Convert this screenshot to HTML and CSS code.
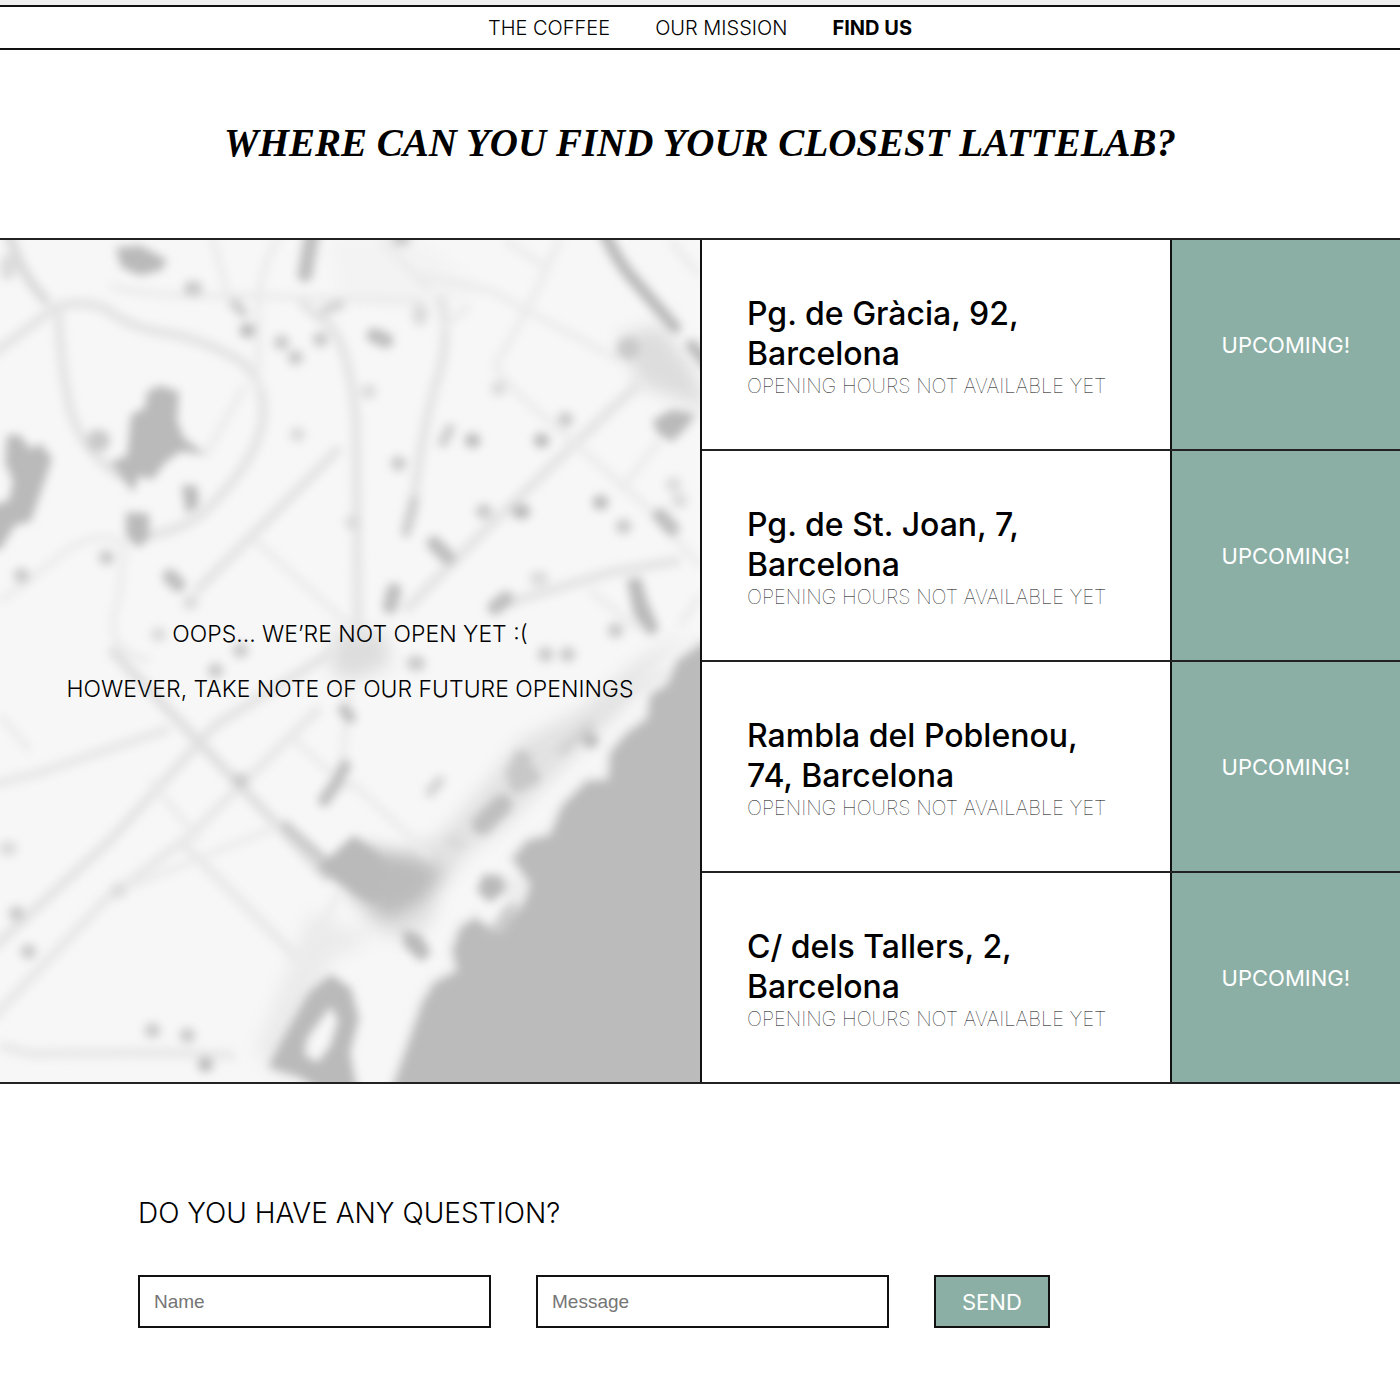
FILE: index.html
```html
<!DOCTYPE html>
<html lang="en">
<head>
  <meta charset="utf-8">
  <meta name="viewport" content="width=device-width, initial-scale=1">
  <title>LatteLab – Find us</title>
  <link rel="stylesheet" href="styles.css">
</head>
<body>
  <header class="top">
    <nav class="nav">
      <a href="#coffee">THE COFFEE</a>
      <a href="#mission">OUR MISSION</a>
      <a href="#find" class="active" aria-current="page">FIND US</a>
    </nav>
  </header>
  <main>
    <h1 class="title">WHERE CAN YOU FIND YOUR CLOSEST LATTELAB?</h1>
    <section class="finder" id="find">
      <div class="map">
        <svg class="map-art" viewBox="0 238 700 845" preserveAspectRatio="xMidYMid slice" aria-hidden="true">
          <defs>
            <filter id="soft" x="-5%" y="-5%" width="110%" height="110%"><feGaussianBlur stdDeviation="5"/></filter>
            <filter id="wide" x="-5%" y="-5%" width="110%" height="110%"><feGaussianBlur stdDeviation="9"/></filter>
          </defs>
          <rect x="0" y="238" width="700" height="845" fill="#f7f7f7"/>
          <!-- pale built-up zones -->
          <g filter="url(#wide)">
            <path fill="#ddd" d="M618 335L660 325L690 365L710 410L670 395L640 385Z"/>
            <path fill="#ddd" d="M335 630L385 632L390 665L350 680L330 670Z"/>
            <path fill="#e2e2e2" d="M690 630L650 670L620 710L580 750L550 780L500 830L470 850L440 890L430 925L400 940L360 920L400 850L440 835L480 790L520 740L580 710L640 660Z"/>
            <path fill="#ebebeb" d="M310 912L375 938L330 960L285 1083L255 1050Z"/>
            <path fill="#f3f3f3" d="M330 238L420 238L480 290L440 310L340 300Z"/>
            <path fill="#bbb" d="M360 845L410 855L445 870L425 900L390 920L350 895Z"/>
          </g>
          <g filter="url(#soft)">
            <!-- streets -->
            <g fill="none" stroke="#e4e4e4" stroke-width="10">
              <path d="M-10 355Q40 320 52 308Q80 298 105 308Q130 328 170 333Q205 340 240 360Q265 380 263 415Q260 460 200 515Q170 535 140 535"/>
              <path d="M58 310Q62 380 72 415Q88 460 130 480"/>
              <path d="M8 230Q20 275 48 302" stroke="#d9d9d9"/>
              <path d="M340 447L195 592"/>
              <path d="M640 382L575 443L490 525L405 610"/>
              <path d="M440 295Q450 330 440 370Q420 430 412 520"/>
              <path d="M358 640L356 420Q350 350 330 325Q315 315 300 300"/>
              <path d="M690 655Q650 680 620 700L560 750" stroke-width="5"/>
              <path d="M335 650L215 725L110 840L-10 950"/>
              <path d="M320 707L190 835L105 900L-10 1020" stroke="#e8e8e8"/>
              <path d="M500 605L610 572L680 560"/>
              <path d="M-10 785L40 772L170 728" stroke="#e8e8e8"/>
              <path d="M110 648L240 785L330 880" stroke="#dfdfdf"/>
              <path d="M180 840L300 960" stroke="#e9e9e9"/>
              <path d="M0 1045L30 1053L165 1052L235 1055" stroke="#e8e8e8"/>
            </g>
            <g fill="none" stroke="#ebebeb" stroke-width="7">
              <path d="M110 285Q150 298 240 295L420 300"/>
              <path d="M212 235L232 310M280 235Q258 270 258 310L258 390"/>
              <path d="M0 600Q30 580 60 555Q100 525 125 545L118 600Q100 650 150 660"/>
              <path d="M245 385L205 455M255 540L350 625"/>
              <path d="M560 238Q535 300 495 365Q500 380 560 430L640 500L700 565"/>
              <path d="M420 275L490 290L620 360M505 240L548 268M470 305L440 330"/>
              <path d="M660 440L620 490M670 240L700 275"/>
              <path d="M700 595L680 625M590 590L640 630"/>
              <path d="M0 715L30 750M150 780L200 840M120 890L280 825"/>
              <path d="M350 680L340 790M350 780L430 855"/>
              <path d="M290 735L350 790M380 238L430 290"/>
              <path d="M310 950L360 850"/>
            </g>
            <!-- darker avenues -->
            <g fill="none" stroke="#b9b9b9" stroke-linecap="round">
              <path stroke-width="12" d="M602 225Q615 260 638 284L675 327M692 345L708 364"/>
              <path stroke-width="15" d="M313 228L305 274" stroke="#bfbfbf"/>
              <path stroke-width="10" d="M285 825L330 865" stroke="#c8c8c8"/>
            </g>
            <!-- sea -->
            <path fill="#bbb" stroke="#f1f1f1" stroke-width="9" d="M720 630L695 643L675 658L665 682L648 692L645 716L625 730L608 750L606 777L585 778L560 803L548 832L525 838L510 858L526 882L522 900L500 930L485 922L475 915L458 925L450 950L455 968L432 980L420 1000L388 1100L720 1100Z"/>
            <path fill="#bbb" d="M720 632L697 646L677 660L667 684L650 694L647 718L627 732L610 752L608 779L587 780L562 805L550 834L527 840L512 858L530 884L524 902L500 932L485 924L475 917L460 927L452 950L457 970L434 982L422 1002L388 1100L720 1100Z"/>
            <path fill="#eee" d="M495 870L528 882L525 896L505 903Z"/>
            <path fill="#ccc" d="M505 905L520 900L504 932L488 932Z"/>
            <!-- parks and blocks -->
            <g fill="#bababa" stroke="#bababa" stroke-width="2">
              <path d="M117 248L140 246L166 260L160 269L140 274L122 266Z"/>
              <path d="M148 392L160 386L178 392L176 420L183 438L203 453L180 450L164 462L152 478L138 474L133 490L112 462L128 456L132 415L146 408Z"/>
              <path d="M8 435L20 436L30 450L40 444L51 458L42 485L30 520L14 524L0 548L-12 548L-12 508L10 500L14 480L6 462Z"/>
              <path d="M127 513L148 514L148 538L138 546L127 535Z"/>
              <path d="M183 486L196 486L198 504L187 512Z"/>
              <path d="M654 420L672 410L694 414L686 426L672 440L658 432Z"/>
              <path d="M354 836L372 850L385 870L376 900L350 890L318 868Z"/>
              <path fill-rule="evenodd" d="M331 975L350 988L358 1018L349 1052L357 1094L328 1094L300 1076L270 1066L284 1038L310 992ZM331 1004L306 1037L303 1055L318 1063L331 1046L339 1020Z"/>
              <path d="M484 875L500 876L506 888L490 901L478 890Z"/>
              <path d="M404 930L420 935L430 952L421 960L405 945Z"/>
              <path d="M628 580L640 578L646 600L658 628L650 634L635 615Z"/>
            </g>
            <g fill="none" stroke="#bfbfbf" stroke-width="15" stroke-linecap="round">
              <path d="M345 765L338 780L324 800" stroke-width="12"/>
              <path d="M394 590L390 606M506 598L495 607M170 576L178 584"/>
              <path d="M374 335L386 340M434 543L448 557M660 515L672 528"/>
              <path d="M482 824L502 804" stroke-width="20"/>
              <path d="M516 772L530 776M522 760L518 782" stroke-width="20" stroke="#c8c8c8"/>
              <path d="M344 709L350 717" stroke-width="12"/>
              <path d="M450 428L443 442M414 500L406 532M235 303L243 312" stroke-width="10" stroke="#ccc"/>
              <path d="M562 750L590 725M440 780L430 792M325 310L340 304" stroke-width="10" stroke="#d3d3d3"/>
            </g>
            <path d="M628 348h1M98 440h1" stroke="#c9c9c9" stroke-width="22" stroke-linecap="round"/>
            <g fill="none" stroke="#bcbcbc" stroke-width="15" stroke-linecap="round">
              <path d="M472 440h1M541 440h1M247 330h1M600 502h1M205 1064h1M519 511h4M590 740h1"/>
              <path stroke="#cacaca" d="M240 780h1M281 342h1M295 357h1M320 339h1M398 463h1M565 419h1M623 526h1M545 654h1M567 654h1M414 663h4M21 575h1M106 557h1M28 951h1M152 1030h1M187 1035h1M240 650h1M215 670h1M16 913h1M483 511h2M191 288h4M399 238h4M615 630h1"/>
              <path stroke="#dcdcdc" d="M297 434h1M368 391h1M498 388h1M158 634h1M6 848h4M537 578h4M420 310v8M673 484h1M679 500h1M118 890h1M453 842h5M352 522h1M8 262v10M190 602h1"/>
            </g>
          </g>
        </svg>
        <div class="map-text">
          <p>OOPS... WE’RE NOT OPEN YET :(</p>
          <p>HOWEVER, TAKE NOTE OF OUR FUTURE OPENINGS</p>
        </div>
      </div>
      <ul class="shops">
        <li class="shop">
          <div class="place"><h2>Pg. de Gràcia, 92, Barcelona</h2><p>OPENING HOURS NOT AVAILABLE YET</p></div>
          <div class="status">UPCOMING!</div>
        </li>
        <li class="shop">
          <div class="place"><h2>Pg. de St. Joan, 7, Barcelona</h2><p>OPENING HOURS NOT AVAILABLE YET</p></div>
          <div class="status">UPCOMING!</div>
        </li>
        <li class="shop">
          <div class="place"><h2>Rambla del Poblenou, 74, Barcelona</h2><p>OPENING HOURS NOT AVAILABLE YET</p></div>
          <div class="status">UPCOMING!</div>
        </li>
        <li class="shop">
          <div class="place"><h2>C/ dels Tallers, 2, Barcelona</h2><p>OPENING HOURS NOT AVAILABLE YET</p></div>
          <div class="status">UPCOMING!</div>
        </li>
      </ul>
    </section>
    <section class="contact">
      <h2 class="question">DO YOU HAVE ANY QUESTION?</h2>
      <form class="form">
        <input class="field" type="text" name="name" placeholder="Name" aria-label="Name">
        <input class="field" type="text" name="message" placeholder="Message" aria-label="Message">
        <button class="send" type="submit">SEND</button>
      </form>
    </section>
  </main>
</body>
</html>
```
FILE: styles.css
```css
* {
  box-sizing: border-box;
  margin: 0;
  padding: 0;
}

body {
  background: #fff;
  color: #000;
  font-family: Inter, "Liberation Sans", sans-serif;
  font-weight: 300;
}

.top {
  padding-top: 5px;
  background: #f0f0f0;
}

.nav {
  display: flex;
  flex-wrap: wrap;
  justify-content: center;
  gap: 0 45px;
  padding: 9px 16px 8px;
  border-top: 2px solid #111;
  border-bottom: 2px solid #111;
  background: #fff;
}

.nav a {
  color: inherit;
  font-size: 20px;
  line-height: 24px;
  text-decoration: none;
}

.nav .active {
  font-weight: 700;
}

.title {
  padding: 68px 16px 70px;
  font: italic 700 39px/50px "Liberation Serif", serif;
  text-align: center;
}

.finder {
  display: grid;
  grid-template-columns: 1fr 1fr;
  border-top: 2px solid #222;
  border-bottom: 2px solid #222;
}

.map {
  position: relative;
  display: flex;
  align-items: center;
  justify-content: center;
  overflow: hidden;
  background: #f7f7f7;
}

.map-art {
  position: absolute;
  inset: 0;
  width: 100%;
  height: 100%;
}

.map-text {
  position: relative;
  display: grid;
  gap: 27px;
  padding: 0 16px;
  font-size: 23px;
  line-height: 28px;
  text-align: center;
}

.shops {
  border-left: 2px solid #111;
  list-style: none;
}

.shop {
  display: grid;
  grid-template-columns: 67% 33%;
}

.shop + .shop {
  border-top: 2px solid #222;
}

.place {
  padding: 54px 45px 51px;
}

.place h2 {
  font-size: 32px;
  font-weight: 500;
  line-height: 40px;
}

.place p {
  font-size: 20px;
  font-weight: 100;
  line-height: 24px;
}

.status {
  display: flex;
  align-items: center;
  justify-content: center;
  border-left: 2px solid #111;
  background: #8bafa5;
  color: #fff;
  font-size: 22px;
  font-weight: 400;
}

.contact {
  padding: 111px 138px 72px;
}

.question {
  margin-bottom: 44px;
  font-size: 28px;
  font-weight: 300;
  line-height: 36px;
}

.form {
  display: flex;
  flex-wrap: wrap;
  gap: 45px;
}

.field {
  flex: 0 1 353px;
  min-width: 0;
  padding: 14px;
  border: 2px solid #111;
  background: #fff;
  font: 19px/21px "Liberation Sans", sans-serif;
}

.field::placeholder {
  color: #757575;
}

.send {
  padding: 0 26px;
  border: 2px solid #111;
  background: #8bafa5;
  color: #fff;
  font: 400 22px/28px Inter, sans-serif;
}
```
